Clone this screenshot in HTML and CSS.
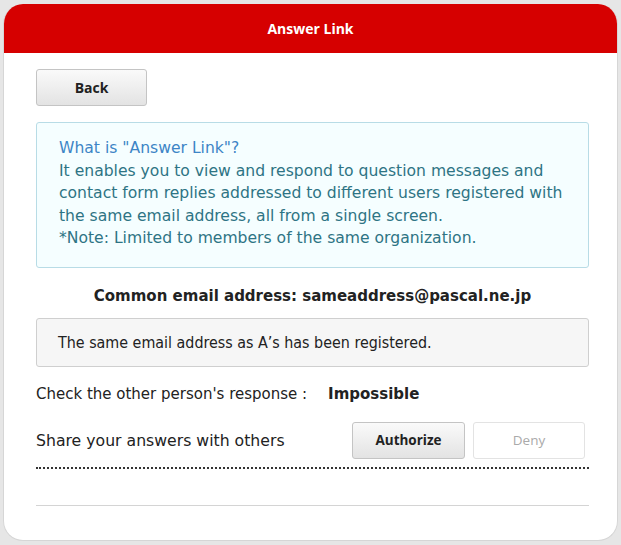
FILE: index.html
```html
<!DOCTYPE html>
<html>
<head>
<meta charset="utf-8">
<link rel="stylesheet" href="styles.css">
</head>
<body>
<div class="card">
  <div class="header">Answer Link</div>
  <div class="content">
    <div class="back-row"><button class="btn btn-back">Back</button></div>
    <div class="info">
      <div class="info-title">What is "Answer Link"?</div>
      <div class="info-body">It enables you to view and respond to question messages and contact form replies addressed to different users registered with the same email address, all from a single screen.<br>*Note: Limited to members of the same organization.</div>
    </div>
    <div class="common">Common email address: sameaddress@pascal.ne.jp</div>
    <div class="notice">The same email address as A’s has been registered.</div>
    <div class="check">Check the other person's response :<b class="check-value">Impossible</b></div>
    <div class="share">
      <span class="share-label">Share your answers with others</span>
      <div class="share-btns">
        <button class="btn btn-auth">Authorize</button>
        <button class="btn btn-deny">Deny</button>
      </div>
    </div>
    <div class="rule"></div>
  </div>
</div>
</body>
</html>
```
FILE: styles.css
```css
html, body {
  margin: 0;
  padding: 0;
  background: #e6e6e6;
}
body {
  padding: 4px 3px 3px 3px;
  font-family: "DejaVu Sans", "Open Sans", sans-serif;
  color: #222;
}
.card {
  background: #fff;
  border-radius: 20px;
  border: 1px solid #d6d6d6;
  border-top: none;
  height: 537px;
  box-sizing: border-box;
  overflow: hidden;
}
.header {
  background: #d60000;
  color: #fff;
  height: 49px;
  display: flex;
  align-items: center;
  justify-content: center;
  font-family: "Open Sans", sans-serif;
  font-weight: bold;
  font-size: 14px;
}
.content {
  padding: 16px 28px 0 32px;
}
.btn {
  font-family: "Open Sans", sans-serif;
  border-radius: 3px;
  cursor: pointer;
  padding: 0;
}
.btn-back {
  width: 111px;
  height: 37px;
  border: 1px solid #c4c4c4;
  background: linear-gradient(#fafafa, #e3e3e3);
  font-weight: bold;
  font-size: 14px;
  color: #222;
}
.info {
  margin-top: 16px;
  border: 1px solid #b8dce6;
  background: #f5feff;
  border-radius: 3px;
  padding: 14px 18px 17px 22px;
  font-size: 15.6px;
  line-height: 22.5px;
}
.info-title { color: #3d85c6; }
.info-body { color: #2e7484; }
.common {
  text-align: center;
  font-weight: bold;
  font-size: 15px;
  margin-top: 16px;
  line-height: 24px;
}
.notice {
  margin-top: 10px;
  border: 1px solid #cfcfcf;
  background: #f6f6f6;
  border-radius: 3px;
  height: 49px;
  box-sizing: border-box;
  padding: 0 21px;
  display: flex;
  align-items: center;
  font-family: "DejaVu Sans Condensed", "DejaVu Sans", sans-serif;
  font-size: 15.9px;
}
.check {
  margin-top: 16px;
  font-size: 15px;
  line-height: 22px;
}
.check-value {
  margin-left: 21px;
  font-size: 15px;
}
.share {
  margin-top: 17px;
  display: flex;
  align-items: center;
  justify-content: space-between;
  font-size: 15.7px;
  border-bottom: 2px dotted #333;
  padding-bottom: 8px;
}
.share-btns {
  display: flex;
  gap: 8px;
  margin-right: 4px;
}
.btn-auth {
  width: 113px;
  height: 37px;
  border: 1px solid #c4c4c4;
  background: linear-gradient(#fafafa, #e3e3e3);
  font-weight: bold;
  font-size: 13.5px;
  color: #222;
}
.btn-deny {
  width: 112px;
  height: 37px;
  border: 1px solid #e3e3e3;
  background: #fff;
  font-size: 13.5px;
  color: #aaa;
}
.rule {
  margin-top: 36px;
  border-top: 1px solid #d4d4d4;
}
```
